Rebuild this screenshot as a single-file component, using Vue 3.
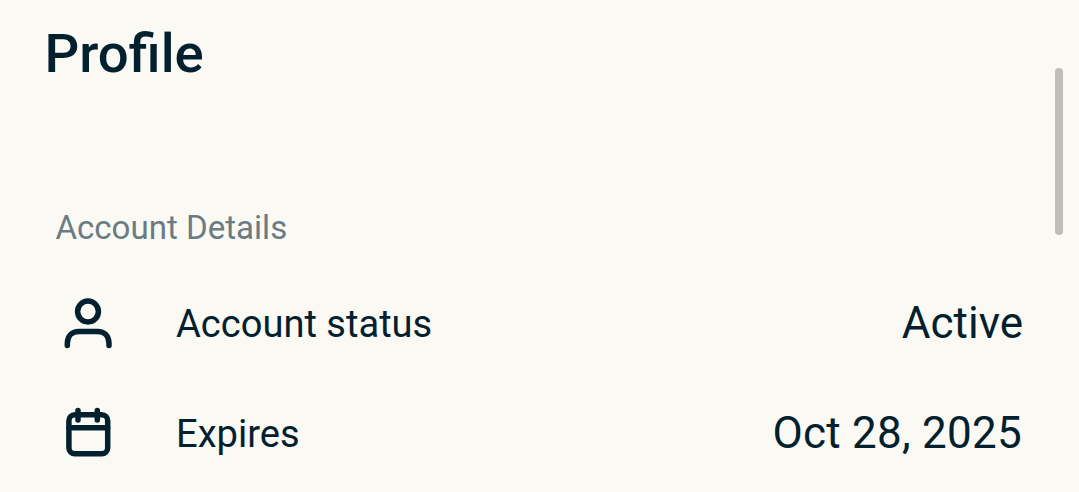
<script setup>
const rows = [
  { icon: 'user', label: 'Account status', value: 'Active' },
  { icon: 'calendar', label: 'Expires', value: 'Oct 28, 2025' },
]
</script>

<template>
  <main class="screen">
    <h1 class="title">Profile</h1>
    <h2 class="section">Account Details</h2>
    <div v-for="row in rows" :key="row.label" class="row">
      <svg v-if="row.icon === 'user'" class="icon" viewBox="0 0 60 60">
        <circle cx="30" cy="17.5" r="10.4" />
        <path d="M9.300 51.500V49.500C9.300 42 14 37.500 21 37.500H39.500C46.500 37.500 51 42 51 49.500V51.500" />
      </svg>
      <svg v-else class="icon" viewBox="0 0 60 60">
        <rect x="10.9" y="10.8" width="38.8" height="38.900" rx="6" />
        <path d="M11 23.700H49.600M20 6.600V15.900M39.300 6.600V15.900" />
      </svg>
      <span class="label">{{ row.label }}</span>
      <span class="value" :class="row.icon">{{ row.value }}</span>
    </div>
    <div class="scrollbar"></div>
  </main>
</template>

<style>
body {
  margin: 0;
  overflow: hidden;
}
</style>

<style scoped>
.screen {
  position: relative;
  box-sizing: border-box;
  width: 1079px;
  height: 492px;
  padding: 21px 56px 0 44px;
  overflow: hidden;
  background: #faf9f3;
  color: #02202e;
  font-family: Roboto, sans-serif;
}
.title {
  margin: 0 0 0 0.5px;
  font-size: 54.5px;
  line-height: 64px;
  font-weight: 500;
}
.section {
  margin: 123px 0 21px 11.4px;
  font-size: 33.1px;
  line-height: 40px;
  font-weight: 400;
  color: #6b7b84;
}
.row {
  display: flex;
  align-items: center;
  height: 110px;
}
.icon {
  width: 60px;
  height: 60px;
  margin-left: 14px;
  fill: none;
  stroke: currentColor;
  stroke-width: 5.5;
  stroke-linecap: round;
}
.label {
  margin-left: 58px;
  font-size: 38.1px;
}
.value {
  margin: -2px 0 0 auto;
  font-size: 44px;
}
.value.calendar {
  margin-right: 1px;
  letter-spacing: 0.25px;
}
.scrollbar {
  position: absolute;
  top: 68px;
  right: 16px;
  width: 8px;
  height: 167px;
  border-radius: 4px;
  background: #bebdb9;
}
</style>
